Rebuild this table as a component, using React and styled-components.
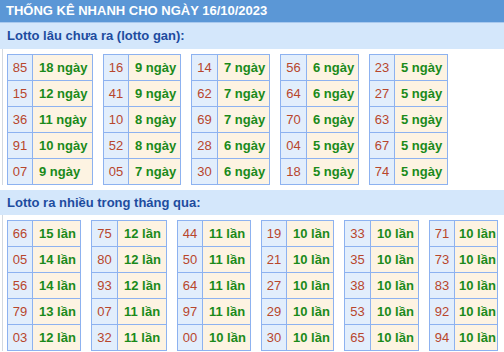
import { Fragment } from "react";
import styled, { createGlobalStyle } from "styled-components";

const GlobalStyle = createGlobalStyle`
  body {
    margin: 0;
    background: #ffffff;
    font-family: "Liberation Sans", Arial, sans-serif;
  }
`;

const gan = [
  { w: 86, num: 24, rows: [["85", "18 ngày"], ["15", "12 ngày"], ["36", "11 ngày"], ["91", "10 ngày"], ["07", "9 ngày"]] },
  { w: 78, num: 24, rows: [["16", "9 ngày"], ["41", "9 ngày"], ["10", "8 ngày"], ["52", "8 ngày"], ["05", "7 ngày"]] },
  { w: 79, num: 25, rows: [["14", "7 ngày"], ["62", "7 ngày"], ["69", "7 ngày"], ["28", "6 ngày"], ["30", "6 ngày"]] },
  { w: 79, num: 25, rows: [["56", "6 ngày"], ["64", "6 ngày"], ["70", "6 ngày"], ["04", "5 ngày"], ["18", "5 ngày"]] },
  { w: 79, num: 24, rows: [["23", "5 ngày"], ["27", "5 ngày"], ["63", "5 ngày"], ["67", "5 ngày"], ["74", "5 ngày"]] },
];

const nhieu = [
  { w: 74, num: 24, rows: [["66", "15 lần"], ["05", "14 lần"], ["56", "14 lần"], ["79", "13 lần"], ["03", "12 lần"]] },
  { w: 76, num: 25, rows: [["75", "12 lần"], ["80", "12 lần"], ["93", "12 lần"], ["07", "11 lần"], ["32", "11 lần"]] },
  { w: 74, num: 24, rows: [["44", "11 lần"], ["50", "11 lần"], ["64", "11 lần"], ["97", "11 lần"], ["00", "10 lần"]] },
  { w: 73, num: 24, rows: [["19", "10 lần"], ["21", "10 lần"], ["27", "10 lần"], ["29", "10 lần"], ["30", "10 lần"]] },
  { w: 75, num: 25, rows: [["33", "10 lần"], ["35", "10 lần"], ["38", "10 lần"], ["53", "10 lần"], ["65", "10 lần"]] },
  { w: 69, num: 24, pad: 4, rows: [["71", "10 lần"], ["73", "10 lần"], ["83", "10 lần"], ["92", "10 lần"], ["94", "10 lần"]] },
];

const Page = styled.div`
  width: 504px;
  height: 352px;
  overflow: hidden;
`;

const TopBar = styled.div`
  height: 22px;
  background: #5b97d6;
  border-bottom: 1px solid #a9c9ee;
  color: #ffffff;
  font-weight: bold;
  font-size: 13px;
  line-height: 22px;
  padding-left: 6px;
  white-space: nowrap;
`;

const SectionTitle = styled.div`
  height: ${(p) => p.$h}px;
  line-height: ${(p) => p.$h}px;
  background: #d4e7fb;
  color: #1d4c9f;
  font-weight: bold;
  font-size: 13px;
  padding-left: 7px;
  margin-top: ${(p) => p.$mt || 0}px;
`;

const Body = styled.div`
  margin-left: 2px;
  border-left: 1px solid #d3d9e0;
  padding: 5px 0 0 4px;
  display: flex;
  gap: 10px;
`;

const Block = styled.div`
  box-sizing: border-box;
  width: ${(p) => p.$w}px;
  flex: none;
  display: grid;
  grid-template-columns: ${(p) => p.$num}px 1fr;
  grid-auto-rows: 25px;
  gap: 1px;
  background: #8db2f0;
  border: 1px solid #8db2f0;
`;

const NumCell = styled.div`
  background: #e2eefc;
  color: #b8462c;
  font-size: 13px;
  line-height: 25px;
  text-align: center;
`;

const ValCell = styled.div`
  background: #fdf3e2;
  color: #1a8a1a;
  font-size: 13px;
  font-weight: bold;
  line-height: 25px;
  padding-left: ${(p) => p.$pad}px;
  white-space: nowrap;
  overflow: hidden;
`;

function Grid({ data }) {
  return (
    <Body>
      {data.map((t, i) => (
        <Block key={i} $w={t.w} $num={t.num}>
          {t.rows.map(([n, v]) => (
            <Fragment key={n}>
              <NumCell>{n}</NumCell>
              <ValCell $pad={t.pad || 6}>{v}</ValCell>
            </Fragment>
          ))}
        </Block>
      ))}
    </Body>
  );
}

export default function App() {
  return (
    <Page>
      <GlobalStyle />
      <TopBar>THỐNG KÊ NHANH CHO NGÀY 16/10/2023</TopBar>
      <SectionTitle $h={26}>Lotto lâu chưa ra (lotto gan):</SectionTitle>
      <Grid data={gan} />
      <SectionTitle $h={25} $mt={5}>Lotto ra nhiều trong tháng qua:</SectionTitle>
      <Grid data={nhieu} />
    </Page>
  );
}
